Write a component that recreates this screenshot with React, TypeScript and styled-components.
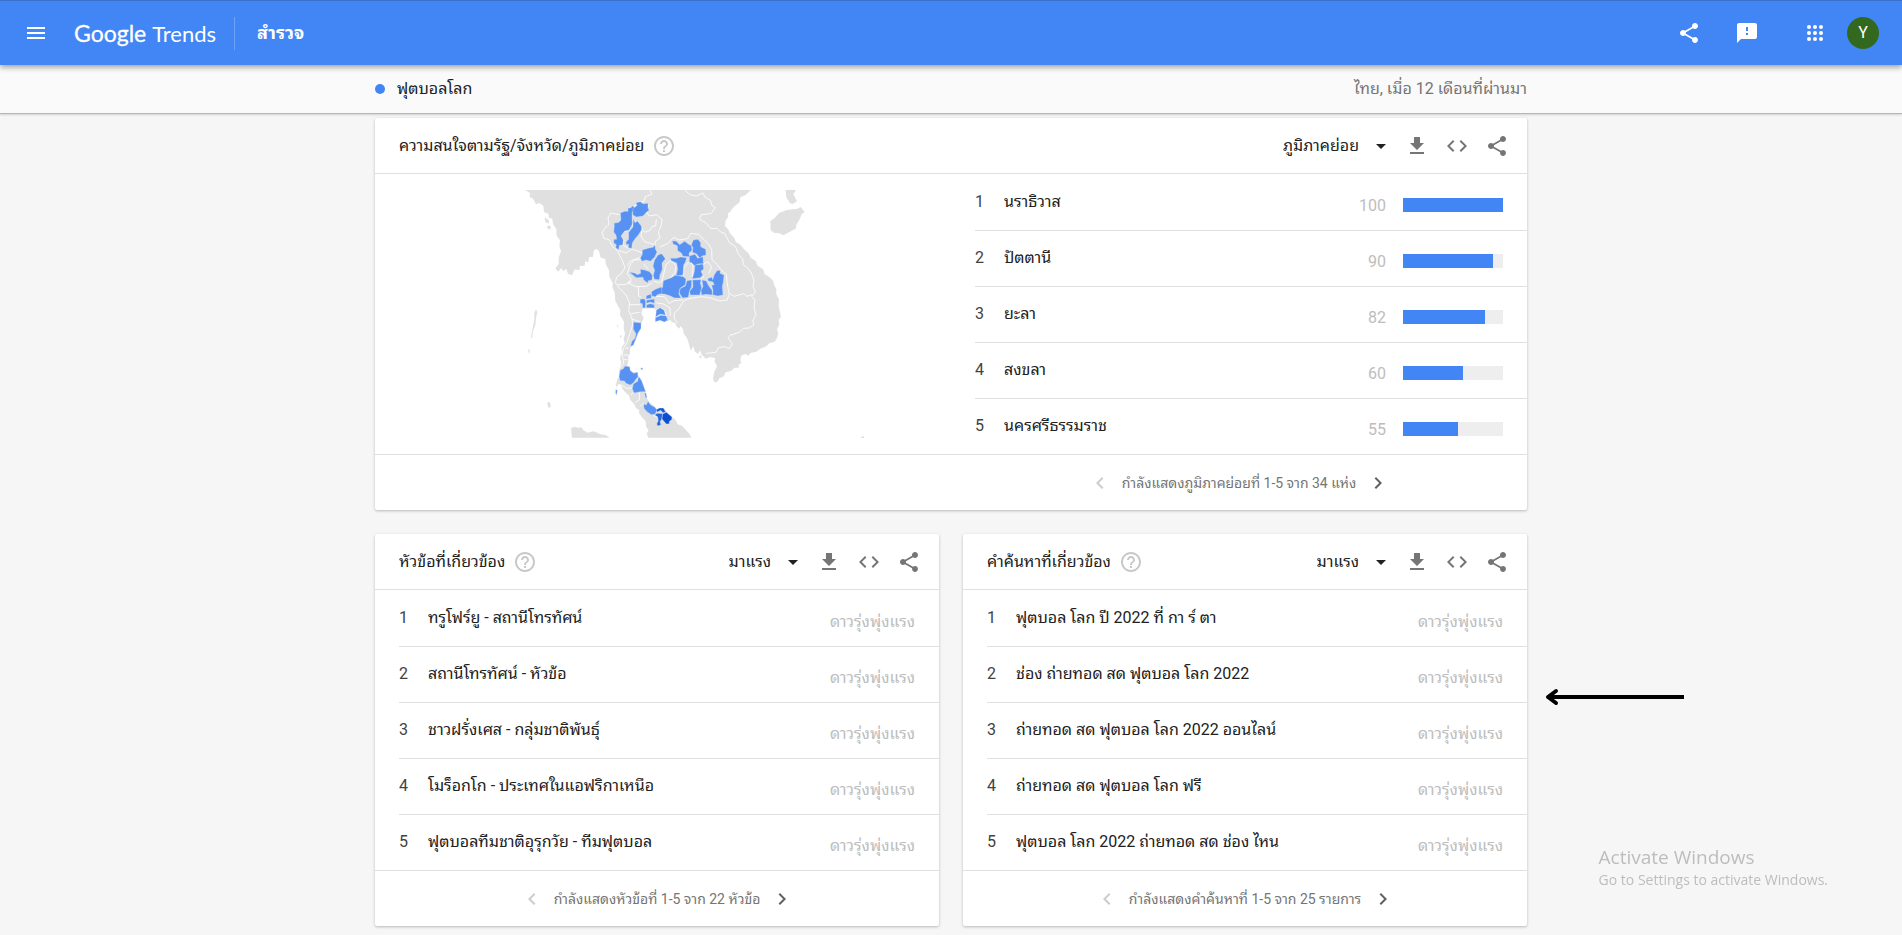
import React from "react";
import styled, { createGlobalStyle } from "styled-components";

const GlobalStyle = createGlobalStyle`
  *, *::before, *::after { box-sizing: border-box; }
  body {
    margin: 0;
    background: #f6f6f6;
    color: #212121;
    font-family: Roboto, "Noto Sans Thai Looped", sans-serif;
    font-size: 16px;
    line-height: 24px;
  }
`;

const Page = styled.div`
  position: relative;
  min-height: 100vh;
`;

const Header = styled.header`
  position: relative;
  z-index: 1;
  display: flex;
  align-items: center;
  height: 65px;
  padding: 0 23px 0 24px;
  border-top: 1px solid #3b72c8;
  background: #4285f4;
  color: #fff;
  box-shadow: 0 2px 6px rgba(0, 0, 0, 0.4);
`;

const IconButton = styled.button`
  display: flex;
  align-items: center;
  justify-content: center;
  width: 24px;
  height: 24px;
  padding: 0;
  border: 0;
  background: none;
  color: inherit;
  cursor: pointer;
`;

const Logo = styled.a`
  display: flex;
  align-items: baseline;
  gap: 6px;
  margin-left: 26px;
  color: #fff;
  font-family: Lato, sans-serif;
  font-size: 22px;
  line-height: 32px;
  text-decoration: none;
  white-space: nowrap;
`;

const LogoStrong = styled.span`
  font-size: 23px;
  -webkit-text-stroke: 0.3px #fff;
`;

const HeaderNav = styled.nav`
  display: flex;
  align-items: center;
  height: 33px;
  margin-left: 18px;
  padding-left: 22px;
  border-left: 1px solid #6ea2f7;
`;

const NavLink = styled.a`
  color: #fff;
  font-size: 18px;
  font-weight: 700;
  text-decoration: none;
`;

const HeaderActions = styled.div`
  display: flex;
  align-items: center;
  margin-left: auto;
`;

const ActionGroup = styled.div<{ $gap: number; $after?: number }>`
  display: flex;
  align-items: center;
  gap: ${(p) => p.$gap}px;
  margin-right: ${(p) => p.$after ?? 0}px;
`;

const Avatar = styled.button`
  width: 32px;
  height: 32px;
  padding: 0;
  border: 0;
  border-radius: 50%;
  background: #33691e;
  color: #fff;
  font: 400 16px/32px Roboto, sans-serif;
`;

const SubHeader = styled.div`
  height: 49px;
  border-bottom: 1px solid #b4b6b4;
  background: #fafafa;
  box-shadow: 0 1px 2px rgba(0, 0, 0, 0.15);
`;

const Container = styled.div`
  width: 100%;
  max-width: 1152px;
  margin: 0 auto;
`;

const SubHeaderInner = styled(Container)`
  display: flex;
  align-items: center;
  height: 48px;
`;

const Dot = styled.span`
  width: 10px;
  height: 10px;
  margin-right: 12px;
  border-radius: 50%;
  background: #4285f4;
`;

const Filters = styled.span`
  margin-left: auto;
  color: #757575;
`;

const Main = styled(Container)`
  display: grid;
  grid-template-columns: 1fr 1fr;
  gap: 24px;
  padding: 4px 0 8px;
`;

const Card = styled.section<{ $wide?: boolean }>`
  grid-column: ${(p) => (p.$wide ? "1 / -1" : "auto")};
  border-radius: 2px;
  background: #fff;
  box-shadow: 0 1px 3px rgba(0, 0, 0, 0.25);
`;

const CardHeader = styled.header`
  display: flex;
  align-items: center;
  height: 56px;
  padding: 0 18px 0 24px;
  border-bottom: 1px solid #e0e0e0;
`;

const CardTitle = styled.h2`
  margin: 0 8px 0 0;
  font-size: 16px;
  font-weight: 400;
  line-height: 24px;
`;

const HelpButton = styled(IconButton)`
  color: #c8c8c8;
`;

const Tools = styled.div`
  display: flex;
  align-items: center;
  gap: 16px;
  margin-left: auto;
  color: #757575;
`;

const Picker = styled.label`
  display: grid;
  align-items: center;
  margin-right: -4px;
  color: #212121;
  & > * { grid-area: 1 / 1; }
  & > svg { justify-self: end; pointer-events: none; }
`;

const Select = styled.select`
  appearance: none;
  field-sizing: content;
  margin: 0;
  padding: 0 34px 0 0;
  border: 0;
  background: none;
  color: inherit;
  font: inherit;
`;

const RegionBody = styled.div`
  display: grid;
  grid-template-columns: 1fr 1fr;
`;

const List = styled.ol`
  margin: 0;
  padding: 0 0 0 24px;
  list-style: none;
`;

const Row = styled.li`
  display: flex;
  align-items: center;
  height: 56px;
  padding-right: 24px;
  & + & { box-shadow: inset 0 1px #e0e0e0; }
`;

const Rank = styled.span`
  width: 29px;
  color: #424242;
`;

const RowLink = styled.a`
  flex: 1;
  color: #212121;
  text-decoration: none;
`;

const Value = styled.span`
  padding-top: 8px;
  color: #bdbdbd;
`;

const Track = styled.span`
  width: 100px;
  height: 14px;
  margin: 6px 0 0 17px;
  background: #eee;
`;

const Fill = styled.span`
  display: block;
  height: 100%;
  background: #4285f4;
`;

const PagerBar = styled.footer`
  border-top: 1px solid #e0e0e0;
`;

const Pager = styled.div<{ $half?: boolean }>`
  display: flex;
  align-items: center;
  justify-content: center;
  gap: 10px;
  height: 55px;
  margin-left: ${(p) => (p.$half ? "50%" : "0")};
  color: #757575;
  font-size: 14px;
`;

const PageButton = styled(IconButton)`
  color: #616161;
  &:disabled { color: #ccc; cursor: default; }
`;

const MapSvg = styled.svg`
  display: block;
  width: 100%;
  height: 280px;
`;

const Annotation = styled.svg`
  position: absolute;
  top: 687px;
  left: calc(50% + 594px);
`;

const Watermark = styled.aside`
  position: fixed;
  right: 74px;
  bottom: 44px;
  color: #bdbdbd;
  font-family: "Open Sans", sans-serif;
  font-size: 14px;
  line-height: 22px;
  pointer-events: none;
`;

const WatermarkTitle = styled.div`
  font-size: 19px;
  line-height: 24px;
`;

const paths = {
  menu: "M3 18h18v-2H3v2zm0-5h18v-2H3v2zm0-7v2h18V6H3z",
  share:
    "M18 16.08c-.76 0-1.44.3-1.96.77L8.91 12.7c.05-.23.09-.46.09-.7s-.04-.47-.09-.7l7.05-4.11c.54.5 1.25.81 2.04.81 1.66 0 3-1.34 3-3s-1.34-3-3-3-3 1.34-3 3c0 .24.04.47.09.7L8.04 9.81C7.5 9.31 6.79 9 6 9c-1.66 0-3 1.34-3 3s1.34 3 3 3c.79 0 1.5-.31 2.04-.81l7.12 4.16c-.05.21-.08.43-.08.65 0 1.61 1.31 2.92 2.92 2.92s2.92-1.31 2.92-2.92-1.31-2.92-2.92-2.92z",
  feedback:
    "M20 2H4c-1.1 0-1.99.9-1.99 2L2 22l4-4h14c1.1 0 2-.9 2-2V4c0-1.1-.9-2-2-2zm-7 12h-2v-2h2v2zm0-4h-2V6h2v4z",
  download: "M19 9h-4V3H9v6H5l7 7 7-7zM5 18v2h14v-2H5z",
  code: "M9.4 16.6L4.8 12l4.6-4.6L8 6l-6 6 6 6 1.4-1.4zm5.2 0l4.6-4.6-4.6-4.6L16 6l6 6-6 6-1.4-1.4z",
  help: "M11 18h2v-2h-2v2zm1-16C6.48 2 2 6.48 2 12s4.48 10 10 10 10-4.48 10-10S17.52 2 12 2zm0 18c-4.41 0-8-3.59-8-8s3.59-8 8-8 8 3.59 8 8-3.59 8-8 8zm0-14c-2.21 0-4 1.79-4 4h2c0-1.1.9-2 2-2s2 .9 2 2c0 2-3 1.75-3 5h2c0-2.25 3-2.5 3-5 0-2.21-1.79-4-4-4z",
  drop: "M7 10l5 5 5-5z",
  left: "M15.41 7.41L14 6l-6 6 6 6 1.41-1.41L10.83 12z",
  right: "M10 6L8.59 7.41 13.17 12l-4.58 4.59L10 18l6-6z",
};

const Icon = ({ name }: { name: keyof typeof paths }) => (
  <svg width="24" height="24" viewBox="0 0 24 24" fill="currentColor" aria-hidden="true">
    <path d={paths[name]} />
  </svg>
);

const AppsIcon = () => (
  <svg width="24" height="24" viewBox="0 0 24 24" fill="currentColor" aria-hidden="true">
    {[6, 12, 18].map((y) => [6, 12, 18].map((x) => <circle key={`${x}-${y}`} cx={x} cy={y} r="2" />))}
  </svg>
);

const land = [
  "M75 30H752L738 44 721 52 719 66 699 83 690 96 684 100 685 111 677 121 675 138 684 147 690 160 703 174 708 186 722 195 732 208 745 219 752 233 767 243 773 257 789 268 794 282 808 291 820 303 822 315 829 327 829 343 837 358 836 378 839 393 843 410 836 419 838 434 831 447 835 459 831 474 824 485 808 490 797 500 781 506 769 515 752 519 744 527 737 522 725 526 721 539 724 549 716 555 717 563 703 563 695 572 677 577 670 590 659 594 651 607 642 606 639 595 643 575 651 559 643 543 646 535 630 531 617 536 603 521 601 510 594 522 584 514 580 498 572 512 566 490 561 474 551 461 549 447 541 438 538 446 529 439 526 429 515 426 511 419 503 424 499 402 492 387 479 383 465 389 462 384 428 386 424 399 431 415 424 430 423 445 413 462 407 481 396 498 390 506 390 520 385 529 385 543 381 558 388 566 399 577 413 575 415 593 424 606 430 622 437 638 441 655 447 667 459 675 470 686 491 684 499 695 516 711 527 721 533 733 547 738 558 750 569 763 574 773H445L440 760 446 752 438 739 437 723 426 712 417 700 418 691 408 684 402 671 391 660 386 646 375 636 367 626 363 613 354 613 351 621 347 617 352 597 359 589 357 575 364 548 360 534 366 519 365 502 374 490 371 476 375 462 371 443 372 425 360 406 361 391 352 374 346 362 344 338 337 322 338 309 328 290 327 271 317 252 316 237 302 233 297 213 288 206 281 213 279 230 267 232 265 247 255 244 254 257 239 258 239 270 224 268 216 286 204 281 199 267 189 273 184 264 174 275 166 265 176 252 176 233 183 214 178 198 180 181 170 167 169 148 159 133 157 116 147 114 145 101 132 96 130 77 118 69 108 73 99 56 89 51 90 39Z",
  "M811 123 824 114 837 99 858 91 877 88 891 87 902 81 914 96 905 103 899 118 889 134 888 145 870 155 850 166 834 158 824 160 812 151Z",
  "M857 30H888L880 43 891 64 878 72 870 70 859 52Z",
  "M108 387 112 397 108 413 106 436 99 452 96 478 93 471 98 443 103 419 103 399Z",
  "M85 506 91 512 86 522Z",
  "M141 669 148 665 153 679 146 684Z",
  "M213 744 225 740 235 743 245 742 250 751 263 758 281 754 302 763 317 765 329 773H216Z",
  "M134 112 147 121 146 131 136 126ZM142 137 153 138 151 149 141 144Z",
  "M1085 770 1092 768V774H1083Z",
  "M598 527 603 526 605 535 599 534ZM351 433 355 438 352 444ZM360 465 366 468 361 475Z",
];

const borders = [
  "M450 30 456 42 436 50 432 64 414 67 405 78 392 83 386 95 373 96 358 104 332 99 324 114 327 134 314 145 306 159 312 175 327 179 337 199 351 211 367 241 375 263 364 281 350 291 346 308 357 323 378 345 389 369 386 391 396 416 398 435 390 459 381 488 370 505 367 526 371 551 361 563",
  "M555 30 569 44 590 48 609 39 615 52 631 61 637 78 646 83 633 101 604 104 598 117 619 130 633 146 651 145 662 156 674 160 688 188 706 199 715 222 728 237 730 254 743 264 754 279 762 302 759 319 766 336 755 349 765 360 762 383 768 404 758 423 762 434 748 444 731 445 718 457 690 466 684 473 697 491 688 506 674 500 655 503 648 517 617 520",
  "M446 75 438 94 448 108 470 104 486 118 483 139 475 155 480 174 465 185 466 197M424 145 434 157 450 151 457 139 467 138 469 118M426 145 423 169 434 185 451 190 464 194",
  "M480 201 504 190 521 172 537 180 563 176 573 160 595 163 611 178 626 192 635 208 636 239 651 253 662 269 679 283 682 312 687 340 703 349 731 341 741 349 757 344",
  "M687 343 682 360 660 363 632 354 605 350 561 357 549 365 537 386 524 398 522 414 533 430",
  "M411 123 392 137 388 151 373 154 361 170 371 181 368 195 386 205",
  "M354 211 379 219 396 207 426 218M382 257 391 243 421 232M423 239 402 240 389 257 382 281 394 299 383 308 408 320 440 319 457 308M445 267 430 251M461 303 478 309 489 301M354 314 375 314 395 304",
  "M486 302 498 254 513 242 528 257 525 278 510 295M550 286 552 262 567 245 579 255 577 291M605 256 623 245 635 261 626 281M603 297 612 289M415 319 416 348 423 351M466 349 493 350 508 370 522 362 549 360M467 368 491 372 510 384 511 407M388 374 421 374M393 401 419 397M395 417 421 425",
  "M376 506 386 503M371 525 385 525M365 616 381 625 396 624M392 645 406 632M405 668 418 660 418 637M421 678 432 670M438 691 456 702 471 712M371 539 382 539",
];

const provinces = [
  "M392 83 399 77 405 86 396 98 396 116 397 132 387 151 374 153 363 168 370 180 368 195 358 196 356 209 347 203 349 194 341 188 342 178 350 178 348 165 341 156 343 138 342 130 357 127 363 119 361 99 374 94 384 94 384 85Z",
  "M399 85 411 77 408 68 421 65 429 71 444 70 444 83 447 91 439 97 429 108 409 111 398 104Z",
  "M400 116 405 128 412 123 424 138 425 149 415 165 407 174 397 188 395 205 385 203 386 193 379 194 378 186 386 178 386 157 399 141Z",
  "M421 235 427 223 427 210 447 204 459 202 465 194 466 207 471 216 464 231 451 244 438 240 426 244Z",
  "M474 225 485 221 496 236 486 249 487 268 480 284 478 299 463 298 460 286 464 271 459 258 464 240Z",
  "M388 277 404 279 412 284 422 280 421 268 434 270 449 275 457 286 456 300 445 302 443 309 431 300 429 292 409 293Z",
  "M517 182 529 184 539 194 554 184 566 193 574 197 576 211 567 219 568 230 549 229 544 219 533 212 532 197 519 192Z",
  "M580 180 594 178 602 188 602 200 617 208 618 225 606 228 600 235 589 221 577 217 579 203 574 195Z",
  "M511 235 529 235 542 231 560 233 556 247 551 254 549 285 528 288 533 268 530 249 514 242Z",
  "M568 228 585 223 593 235 609 230 610 251 592 252 585 259 575 248 568 247Z",
  "M585 255 609 252 611 267 603 274 608 285 601 293 577 296 583 275Z",
  "M490 302 514 293 526 286 540 288 550 290 558 297 556 314 540 325 536 341 543 354 524 354 506 346 493 342 479 342 480 326 488 322Z",
  "M561 302 575 300 574 321 568 334 565 352 548 354 538 339 540 326 556 318Z",
  "M578 300 603 299 601 310 605 323 599 345 571 345 569 334 579 321Z",
  "M606 300 619 303 625 316 636 331 637 345 618 343 605 345 603 331 609 320Z",
  "M623 296 636 291 638 299 643 284 651 272 661 271 660 280 672 285 670 306 667 319 669 345 653 348 638 344 639 330 635 316 643 314 638 305 625 303Z",
  "M454 336 466 328 484 321 486 340 472 344 466 350 456 348Z",
  "M439 347 454 342 454 355 438 357ZM421 357 434 357 437 365 436 383 428 384 427 371 420 369ZM439 361 463 357 463 370 450 366 440 370ZM440 374 451 371 463 374V384L439 383Z",
  "M469 390 480 383 492 390 497 405 480 403 467 411ZM466 413 482 406 499 407 503 421 493 426 480 421 466 425Z",
  "M400 427 423 428 423 445 414 459 407 478 400 496 391 499 396 484 405 475 408 461 400 448Z",
  "M370 566 375 558 389 560 391 572 401 580 413 577 414 590 406 600 402 607 391 615 378 610 373 603 360 602 357 589 361 570Z",
  "M416 589 425 602 434 627 437 635 421 635 402 639 397 626 400 612 413 604Z",
  "M431 672 439 675 444 664 452 675 465 682 471 691 465 703 454 704 441 695 432 685Z",
  "M424 563 428 564 427 570 422 567ZM347 629 352 630 350 644 347 641ZM434 639 438 639 441 655 436 651Z",
];

const darkProvinces: [string, string][] = [
  ["M469 689 479 684 490 684 497 696 489 698 482 691 472 696Z", "#1259d6"],
  ["M471 700 488 701 485 718 480 725 483 734 474 738 470 732 475 722 473 710 465 706Z", "#2468dc"],
  ["M488 702 499 697 516 711 515 719 508 724 508 731 499 732 486 717Z", "#0b4fd0"],
];

const RegionMap = () => (
  <MapSvg viewBox="-375 -18 1728 840" role="img" aria-label="แผนที่ประเทศไทย">
    <g fill="#e0e0e0">
      {land.map((d) => (
        <path key={d} d={d} />
      ))}
    </g>
    <g fill="none" stroke="#fff" strokeWidth="2.5" strokeLinejoin="round">
      {borders.map((d) => (
        <path key={d} d={d} />
      ))}
    </g>
    <g fill="#5792f2" stroke="#d8e5fb" strokeWidth="1" strokeLinejoin="round">
      {provinces.map((d) => (
        <path key={d} d={d} />
      ))}
      {darkProvinces.map(([d, fill]) => (
        <path key={d} d={d} fill={fill} />
      ))}
    </g>
  </MapSvg>
);

const CardHead = ({ title, option }: { title: string; option: string }) => (
  <CardHeader>
    <CardTitle>{title}</CardTitle>
    <HelpButton aria-label="ช่วยเหลือ">
      <Icon name="help" />
    </HelpButton>
    <Tools>
      <Picker>
        <Select aria-label={title} defaultValue={option}>
          <option>{option}</option>
        </Select>
        <Icon name="drop" />
      </Picker>
      <IconButton aria-label="ดาวน์โหลด">
        <Icon name="download" />
      </IconButton>
      <IconButton aria-label="ฝัง">
        <Icon name="code" />
      </IconButton>
      <IconButton aria-label="แชร์">
        <Icon name="share" />
      </IconButton>
    </Tools>
  </CardHeader>
);

const Pagination = ({ text, half }: { text: string; half?: boolean }) => (
  <PagerBar>
    <Pager $half={half}>
      <PageButton disabled aria-label="ก่อนหน้า">
        <Icon name="left" />
      </PageButton>
      <span>{text}</span>
      <PageButton aria-label="ถัดไป">
        <Icon name="right" />
      </PageButton>
    </Pager>
  </PagerBar>
);

const TopicCard = ({ title, items, pager }: { title: string; items: string[]; pager: string }) => (
  <Card>
    <CardHead title={title} option="มาแรง" />
    <List>
      {items.map((item, i) => (
        <Row key={item}>
          <Rank>{i + 1}</Rank>
          <RowLink href="#">{item}</RowLink>
          <Value>ดาวรุ่งพุ่งแรง</Value>
        </Row>
      ))}
    </List>
    <Pagination text={pager} />
  </Card>
);

const regions: [string, number][] = [
  ["นราธิวาส", 100],
  ["ปัตตานี", 90],
  ["ยะลา", 82],
  ["สงขลา", 60],
  ["นครศรีธรรมราช", 55],
];

const topics = [
  "ทรูโฟร์ยู - สถานีโทรทัศน์",
  "สถานีโทรทัศน์ - หัวข้อ",
  "ชาวฝรั่งเศส - กลุ่มชาติพันธุ์",
  "โมร็อกโก - ประเทศในแอฟริกาเหนือ",
  "ฟุตบอลทีมชาติอุรุกวัย - ทีมฟุตบอล",
];

const queries = [
  "ฟุตบอล โลก ปี 2022 ที่ กา ร์ ตา",
  "ช่อง ถ่ายทอด สด ฟุตบอล โลก 2022",
  "ถ่ายทอด สด ฟุตบอล โลก 2022 ออนไลน์",
  "ถ่ายทอด สด ฟุตบอล โลก ฟรี",
  "ฟุตบอล โลก 2022 ถ่ายทอด สด ช่อง ไหน",
];

export default function App() {
  return (
    <Page>
      <GlobalStyle />
      <Header>
        <IconButton aria-label="เมนู">
          <Icon name="menu" />
        </IconButton>
        <Logo href="#">
          <LogoStrong>Google</LogoStrong>
          <span>Trends</span>
        </Logo>
        <HeaderNav>
          <NavLink href="#">สำรวจ</NavLink>
        </HeaderNav>
        <HeaderActions>
          <ActionGroup $gap={34} $after={44}>
            <IconButton aria-label="แชร์">
              <Icon name="share" />
            </IconButton>
            <IconButton aria-label="ส่งความคิดเห็น">
              <Icon name="feedback" />
            </IconButton>
          </ActionGroup>
          <ActionGroup $gap={20}>
            <IconButton aria-label="แอป">
              <AppsIcon />
            </IconButton>
            <Avatar>Y</Avatar>
          </ActionGroup>
        </HeaderActions>
      </Header>

      <SubHeader>
        <SubHeaderInner>
          <Dot />
          <span>ฟุตบอลโลก</span>
          <Filters>ไทย, เมื่อ 12 เดือนที่ผ่านมา</Filters>
        </SubHeaderInner>
      </SubHeader>

      <Main as="main">
        <Card $wide>
          <CardHead title="ความสนใจตามรัฐ/จังหวัด/ภูมิภาคย่อย" option="ภูมิภาคย่อย" />
          <RegionBody>
            <RegionMap />
            <List>
              {regions.map(([name, value], i) => (
                <Row key={name}>
                  <Rank>{i + 1}</Rank>
                  <RowLink href="#">{name}</RowLink>
                  <Value>{value}</Value>
                  <Track>
                    <Fill style={{ width: `${value}%` }} />
                  </Track>
                </Row>
              ))}
            </List>
          </RegionBody>
          <Pagination half text="กำลังแสดงภูมิภาคย่อยที่ 1-5 จาก 34 แห่ง" />
        </Card>
        <TopicCard title="หัวข้อที่เกี่ยวข้อง" items={topics} pager="กำลังแสดงหัวข้อที่ 1-5 จาก 22 หัวข้อ" />
        <TopicCard title="คำค้นหาที่เกี่ยวข้อง" items={queries} pager="กำลังแสดงคำค้นหาที่ 1-5 จาก 25 รายการ" />
      </Main>

      <Annotation width="140" height="20" viewBox="0 0 140 20" fill="none" stroke="#000" strokeWidth="4" aria-hidden="true">
        <path d="M5 10H139" />
        <path d="M11 4L3 10L11 16" strokeLinecap="round" strokeLinejoin="round" />
      </Annotation>

      <Watermark>
        <WatermarkTitle>Activate Windows</WatermarkTitle>
        <div>Go to Settings to activate Windows.</div>
      </Watermark>
    </Page>
  );
}
